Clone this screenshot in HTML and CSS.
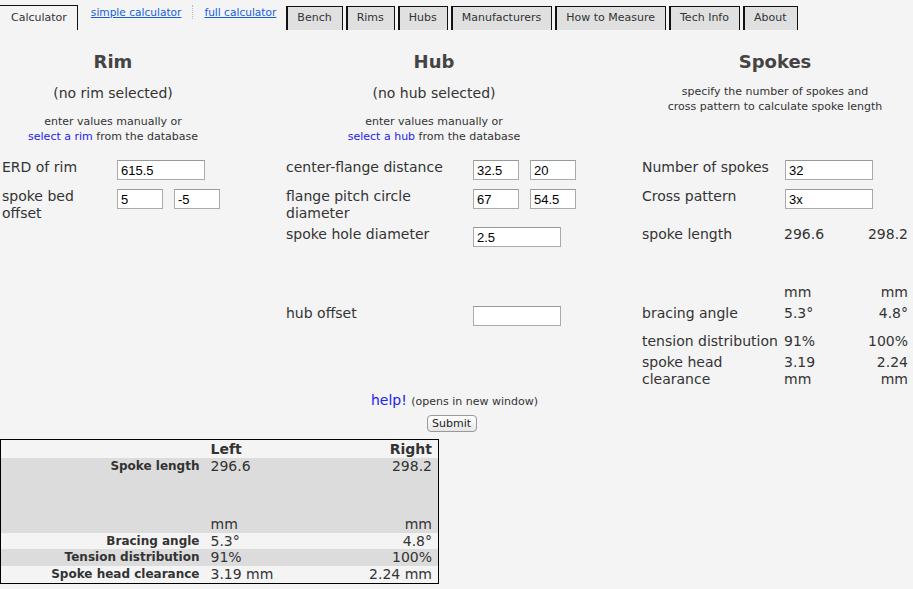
FILE: index.html
```html
<html lang="en">
  <head>
    <meta charset="UTF-8" />
    <title>Spoke Calculator</title>
    <link rel="stylesheet" href="styles.css">
  </head>
  <body>
    <div class="tabs">
      <a class="tab active" href="#">Calculator</a>
      <div class="modes">
        <a href="#">simple calculator</a>
        <span class="sep"></span>
        <a href="#">full calculator</a>
      </div>
      <a class="tab" href="#">Bench</a>
      <a class="tab" href="#">Rims</a>
      <a class="tab" href="#">Hubs</a>
      <a class="tab" href="#">Manufacturers</a>
      <a class="tab" href="#">How to Measure</a>
      <a class="tab" href="#">Tech Info</a>
      <a class="tab" href="#">About</a>
    </div>

    <form class="calc-form" onsubmit="return false">
      <div class="calc">
        <div class="head rim-head">
          <h2>Rim</h2>
          <p class="sel">(no rim selected)</p>
          <p class="note">enter values manually or<br /><a href="#">select a rim</a> from the database</p>
        </div>
        <div class="head hub-head">
          <h2>Hub</h2>
          <p class="sel">(no hub selected)</p>
          <p class="note">enter values manually or<br /><a href="#">select a hub</a> from the database</p>
        </div>
        <div class="head sp-head">
          <h2>Spokes</h2>
          <p class="note sp-note">specify the number of spokes and<br />cross pattern to calculate spoke length</p>
        </div>

        <div class="rim-l">ERD of rim</div>
        <div class="rim-v"><input class="wide" value="615.5" /></div>
        <div class="hub-l">center-flange distance</div>
        <div class="hub-v"><input value="32.5" /><input value="20" /></div>
        <div class="sp-l">Number of spokes</div>
        <div class="sp-v"><input class="wide" value="32" /></div>

        <div class="rim-l">spoke bed<br />offset</div>
        <div class="rim-v"><input value="5" /><input value="-5" /></div>
        <div class="hub-l">flange pitch circle<br />diameter</div>
        <div class="hub-v"><input value="67" /><input value="54.5" /></div>
        <div class="sp-l">Cross pattern</div>
        <div class="sp-v"><input class="wide" value="3x" /></div>

        <div class="hub-l">spoke hole diameter</div>
        <div class="hub-v"><input class="wide" value="2.5" /></div>
        <div class="sp-l">spoke length</div>
        <div class="sp-a">296.6<div class="unit">mm</div></div>
        <div class="sp-b">298.2<div class="unit">mm</div></div>

        <div class="hub-l">hub offset</div>
        <div class="hub-v"><input class="wide" value="" /></div>
        <div class="sp-l">bracing angle</div>
        <div class="sp-a">5.3&deg;</div>
        <div class="sp-b">4.8&deg;</div>

        <div class="sp-l">tension distribution</div>
        <div class="sp-a">91%</div>
        <div class="sp-b">100%</div>

        <div class="sp-l">spoke head<br />clearance</div>
        <div class="sp-a">3.19<br />mm</div>
        <div class="sp-b">2.24<br />mm</div>
      </div>

      <div class="help"><a href="#">help!</a> <span>(opens in new window)</span></div>
      <div class="submit-row"><button type="submit">Submit</button></div>
    </form>

    <table class="results">
      <colgroup>
        <col class="col-label" />
        <col class="col-left" />
        <col />
      </colgroup>
      <tr class="hdr">
        <th></th>
        <th class="left">Left</th>
        <th class="right">Right</th>
      </tr>
      <tr class="dark">
        <th>Spoke length</th>
        <td class="left">296.6<div class="unit">mm</div></td>
        <td class="right">298.2<div class="unit">mm</div></td>
      </tr>
      <tr class="short">
        <th>Bracing angle</th>
        <td class="left">5.3&deg;</td>
        <td class="right">4.8&deg;</td>
      </tr>
      <tr class="dark">
        <th>Tension distribution</th>
        <td class="left">91%</td>
        <td class="right">100%</td>
      </tr>
      <tr>
        <th>Spoke head clearance</th>
        <td class="left">3.19 mm</td>
        <td class="right">2.24 mm</td>
      </tr>
    </table>
  </body>
</html>
```

FILE: styles.css
```css
body {
  margin: 0;
  background: #f4f4f4;
  color: #333;
  font-family: "DejaVu Sans", Verdana, sans-serif;
}
a {
  color: #2222ee;
  text-decoration: none;
}

/* tab bar */
.tabs {
  display: flex;
  align-items: flex-end;
  height: 30px;
  padding-top: 5px;
  box-sizing: border-box;
}
.tab {
  font-size: 11px;
  color: #333;
  background: #e0e0e0;
  border: 1px solid #111;
  border-left-width: 2px;
  border-bottom: none;
  height: 24px;
  line-height: 22px;
  box-sizing: border-box;
  padding: 0 10px 0 9px;
  margin-right: 3px;
  white-space: nowrap;
}
.tab.active {
  background: #f4f4f4;
  height: 25px;
  line-height: 24px;
  margin-left: -1px;
  margin-right: 0;
  border-left-width: 1px;
  padding: 0 10px 0 11px;
}
.modes {
  align-self: flex-start;
  display: flex;
  align-items: center;
  font-size: 10.6px;
  line-height: 14px;
  margin: 0 10px 0 13px;
}
.modes a {
  color: #1560d8;
  text-decoration: underline;
}
.modes .sep {
  width: 0;
  height: 14px;
  border-left: 1px dotted #bbb;
  margin: 0 11px;
}

/* calculator grid */
.calc-form {
  margin: 0;
}
.calc {
  display: grid;
  grid-template-columns: 115px 107px 62px 187px 109px 60px 142px 62px 62px;
  grid-template-rows: 128px 29px 38px 79px 28px 21px 36px;
  padding-left: 2px;
  font-size: 14px;
  line-height: 17px;
}
.head {
  padding-top: 21px;
  text-align: center;
  grid-row: 1;
}
.head h2 {
  margin: 0;
  font-size: 18px;
  line-height: 22px;
  color: #444;
}
.head .sel {
  margin: 11.5px 0 0;
  font-size: 14px;
  line-height: 17px;
}
.head .note {
  margin: 12px 0 0;
  font-size: 11px;
  line-height: 15px;
}
.head .sp-note {
  margin-top: 10.5px;
}
.rim-head { grid-column: 1 / 3; }
.hub-head { grid-column: 4 / 6; }
.sp-head { grid-column: 7 / 10; }

.rim-l { grid-column: 1; }
.rim-v { grid-column: 2; }
.hub-l { grid-column: 4; }
.hub-v { grid-column: 5; }
.sp-l { grid-column: 7; white-space: nowrap; }
.sp-v { grid-column: 8 / 10; padding-left: 1px; }
.sp-a { grid-column: 8; }
.sp-b { grid-column: 9; text-align: right; }
.rim-l,
.hub-l,
.sp-l,
.sp-a,
.sp-b {
  padding-top: 1px;
}
.rim-v,
.hub-v,
.sp-v {
  padding-top: 2px;
  display: flex;
  gap: 11px;
  align-items: flex-start;
}
.calc .unit {
  margin-top: 41px;
}

input {
  width: 46px;
  height: 20px;
  box-sizing: border-box;
  border: 1px solid #aaa;
  border-top-color: #999;
  background: #fff;
  padding: 1px 3px 0;
  font-family: "Liberation Sans", Arial, sans-serif;
  font-size: 13px;
  color: #000;
  margin: 0;
}
input.wide {
  width: 88px;
}

.help {
  margin-top: 3px;
  text-align: center;
  font-size: 14px;
  line-height: 17px;
  padding-right: 4px;
}
.help span {
  font-size: 11px;
}
.submit-row {
  margin-top: 5px;
  text-align: center;
  padding-right: 10px;
}
.submit-row button {
  width: 50px;
  height: 17px;
  padding: 0;
  border: 1px solid #999;
  border-radius: 4px;
  background: linear-gradient(#fff, #e6e6e6);
  font-family: "DejaVu Sans", Verdana, sans-serif;
  font-size: 11px;
  line-height: 15px;
  color: #222;
}

/* results table */
.results {
  margin-top: 7px;
  width: 439px;
  border: 1px solid #000;
  border-collapse: collapse;
  table-layout: fixed;
}
.col-label { width: 205px; }
.col-left { width: 95px; }
.results th,
.results td {
  padding: 0;
  vertical-align: top;
  line-height: 17px;
}
.results th {
  text-align: right;
  font-size: 12px;
  padding-right: 6px;
}
.results td {
  font-size: 14px;
}
.results .left {
  text-align: left;
  padding-left: 5px;
}
.results .right {
  text-align: right;
  padding-right: 6px;
}
.results .hdr th {
  font-size: 14px;
  line-height: 18px;
}
.results tr.short td,
.results tr.short th {
  line-height: 16px;
}
.results tr.dark {
  background: #dcdcdc;
}
.results td .unit {
  margin-top: 41px;
}
```
